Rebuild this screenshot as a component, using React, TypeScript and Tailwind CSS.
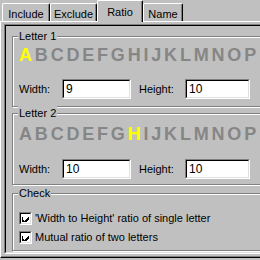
import React from 'react';

const LETTERS = 'ABCDEFGHIJKLMNOP'.split('');

const Tab: React.FC<{ label: string; selected?: boolean; w: string }> = ({ label, selected, w }) => (
  <div
    className={
      selected
        ? `relative z-10 -mb-px h-[22px] ${w} flex items-start pt-[3px] justify-center border-t border-l border-white border-r border-r-black rounded-t-[2px] bg-[#c0c0c0] shadow-[inset_-1px_0_0_#808080]`
        : `h-[18px] ${w} flex items-start pt-[2px] justify-center border-t border-l border-white border-r border-r-black rounded-t-[2px] shadow-[inset_-1px_0_0_#808080]`
    }
  >
    {label}
  </div>
);

const Group: React.FC<{ label: string; className?: string; children: React.ReactNode }> = ({ label, className, children }) => (
  <div className={`relative border border-[#808080] shadow-[inset_1px_1px_0_#fff,1px_1px_0_#fff] ${className ?? ''}`}>
    <span className="absolute -top-[8px] left-[5px] px-px bg-[#c0c0c0] leading-[14px]">{label}</span>
    {children}
  </div>
);

const Field: React.FC<{ value: string; w: string }> = ({ value, w }) => (
  <div className={`${w} h-[20px] border border-t-[#808080] border-l-[#808080] border-b-white border-r-white`}>
    <div className="h-full border border-t-black border-l-black border-b-[#dfdfdf] border-r-[#dfdfdf] bg-white pl-[2px] leading-[16px] text-[12px]">
      {value}
    </div>
  </div>
);

const LetterBlock: React.FC<{ hi: string; w: string; h: string; top: string; gap: string }> = ({ hi, w, h, top, gap }) => (
  <>
    <div className={`flex ml-[6px] ${top} font-bold text-[18px] leading-[18px] tracking-[2.8px] text-[#868686]`}>
      {LETTERS.map((l) => (
        <span key={l} className={l === hi ? 'text-[#ffff00]' : ''}>
          {l}
        </span>
      ))}
    </div>
    <div className={`flex items-center ${gap} ml-[6px]`}>
      <span className="w-[43px]">Width:</span>
      <Field value={w} w="w-[69px]" />
      <span className="ml-[8px] w-[46px]">Height:</span>
      <Field value={h} w="w-[65px]" />
    </div>
  </>
);

const Check: React.FC<{ label: string }> = ({ label }) => (
  <div className="flex items-center h-[19px] ml-[6px]">
    <div className="w-[13px] h-[13px] border border-t-[#808080] border-l-[#808080] border-b-white border-r-white">
      <div className="w-full h-full border border-t-black border-l-black border-b-[#dfdfdf] border-r-[#dfdfdf] bg-white flex items-center justify-center">
        <svg width="7" height="7" viewBox="0 0 7 7" shapeRendering="crispEdges">
          <path d="M0 2h1v3h1v1h1v-1h1v-1h1v-1h1v-1h1v3h-1v1h-1v1h-1v1h-1v1h-1v-1h-1v-1h-1z" fill="#000" />
        </svg>
      </div>
    </div>
    <span className="ml-[3px]">{label}</span>
  </div>
);

export default function App() {
  return (
    <div className="w-[260px] h-[260px] overflow-hidden bg-[#c0c0c0] text-[11px] text-black font-['Liberation_Sans',Arial,sans-serif]">
      <div className="flex items-end h-[21px] pl-[2px]">
        <Tab label="Include" w="w-[48px]" />
        <Tab label="Exclude" w="w-[47px]" />
        <Tab label="Ratio" w="w-[46px]" selected />
        <Tab label="Name" w="w-[40px]" />
      </div>
      <div className="w-[300px] h-[237px] border-t border-l border-white border-b border-b-black shadow-[inset_0_-1px_0_#808080] pl-[3px] pt-[2px]">
        <div className="w-[290px] h-[230px] border border-t-[#808080] border-l-[#808080] border-b-white border-r-white">
          <div className="h-full border border-t-black border-l-black border-b-[#dfdfdf] border-r-[#dfdfdf] pl-[6px] pt-[10px]">
            <Group label="Letter 1" className="h-[71px]">
              <LetterBlock hi="A" w="9" h="10" top="mt-[9px]" gap="mt-[15px]" />
            </Group>
            <Group label="Letter 2" className="h-[72px] mt-[6px]">
              <LetterBlock hi="H" w="10" h="10" top="mt-[11px]" gap="mt-[16px]" />
            </Group>
            <Group label="Check" className="h-[58px] mt-[8px]">
              <div className="pt-[15px]">
                <Check label="'Width to Height' ratio of single letter" />
                <Check label="Mutual ratio of two letters" />
              </div>
            </Group>
          </div>
        </div>
      </div>
    </div>
  );
}
